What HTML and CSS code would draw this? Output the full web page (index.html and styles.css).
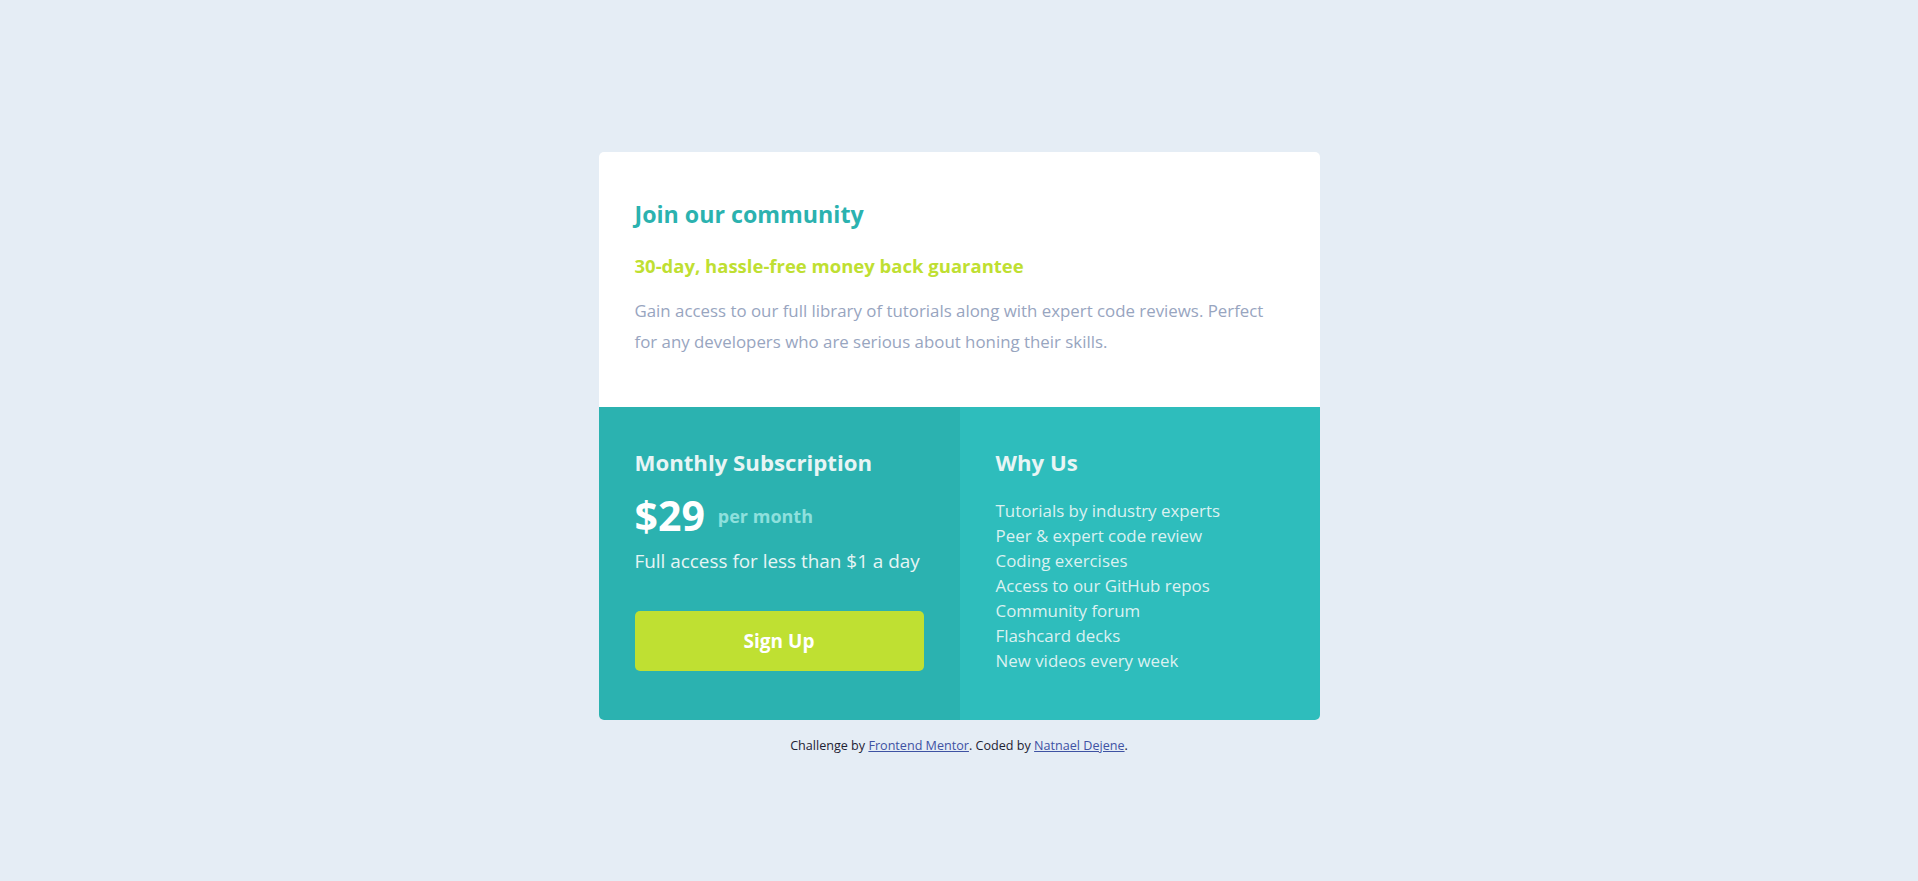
FILE: index.html
```html
<!DOCTYPE html>
<html lang="en">
<head>
<meta charset="UTF-8">
<title>Single Price Grid</title>
<link rel="stylesheet" href="styles.css">
</head>
<body>
<main class="card">
  <section class="intro">
    <h1 class="intro-title">Join our community</h1>
    <h2 class="intro-sub">30-day, hassle-free money back guarantee</h2>
    <p class="intro-text">Gain access to our full library of tutorials along with expert code reviews. Perfect for any developers who are serious about honing their skills.</p>
  </section>
  <div class="bottom">
    <section class="sub">
      <h2 class="panel-title">Monthly Subscription</h2>
      <div class="price-row">
        <span class="price">$29</span>
        <span class="per">per month</span>
      </div>
      <p class="sub-text">Full access for less than $1 a day</p>
      <button class="signup">Sign Up</button>
    </section>
    <section class="why">
      <h2 class="panel-title">Why Us</h2>
      <ul class="why-list">
        <li>Tutorials by industry experts</li>
        <li>Peer &amp; expert code review</li>
        <li>Coding exercises</li>
        <li>Access to our GitHub repos</li>
        <li>Community forum</li>
        <li>Flashcard decks</li>
        <li>New videos every week</li>
      </ul>
    </section>
  </div>
</main>
<footer class="attribution">
  Challenge by <a href="#">Frontend Mentor</a>. Coded by <a href="#">Natnael Dejene</a>.
</footer>
</body>
</html>
```

FILE: styles.css
```css
* { box-sizing: border-box; }

body {
  margin: 0;
  min-height: 100vh;
  background: #e5edf5;
  font-family: "Open Sans", "Liberation Sans", sans-serif;
  display: flex;
  flex-direction: column;
  align-items: center;
  padding-top: 152px;
}

.card {
  width: 721px;
  border-radius: 5px;
  overflow: hidden;
  background: #ffffff;
}

.intro {
  padding: 48.5px 50px 50.5px 36px;
}

.intro-title {
  margin: 0;
  font-size: 23.2px;
  line-height: 27px;
  font-weight: 700;
  color: #2bb2af;
}

.intro-sub {
  margin: 27px 0 0 0;
  font-size: 18.5px;
  line-height: 22px;
  font-weight: 700;
  color: #bfdf32;
}

.intro-text {
  margin: 18px 0 0 0;
  font-size: 16.85px;
  line-height: 31px;
  color: #98a5bf;
}

.bottom {
  display: grid;
  grid-template-columns: 361px 360px;
}

.sub {
  background: #2bb2b0;
  padding: 42.5px 36px 49px 36px;
}

.why {
  background: #2ebdbc;
  padding: 42.5px 36px 40px 36px;
}

.panel-title {
  margin: 0;
  font-size: 22.2px;
  line-height: 26px;
  font-weight: 700;
  color: #e8f5f5;
}

.price-row {
  display: flex;
  align-items: center;
  gap: 13px;
  margin-top: 18.5px;
  height: 43px;
}

.price {
  font-size: 41px;
  line-height: 43px;
  font-weight: 700;
  color: #ffffff;
}

.per {
  font-size: 18px;
  line-height: 20px;
  font-weight: 700;
  color: #8ee0dd;
  padding-top: 1px;
}

.sub-text {
  margin: 14px 0 0 0;
  font-size: 18.9px;
  line-height: 20px;
  color: #e6f5f5;
}

.signup {
  display: block;
  width: 100%;
  height: 60px;
  margin-top: 39.5px;
  border: none;
  border-radius: 5px;
  background: #bfe032;
  color: #ffffff;
  font-family: inherit;
  font-size: 19px;
  font-weight: 700;
  cursor: pointer;
}

.why-list {
  list-style: none;
  margin: 22px 0 0 0;
  padding: 0;
  font-size: 16.9px;
  line-height: 25.1px;
  color: #dbf1f1;
}

.attribution {
  margin-top: 19px;
  font-size: 12.6px;
  line-height: 14px;
  color: #1d2233;
  text-align: center;
}

.attribution a {
  color: #3e52a3;
}
```
